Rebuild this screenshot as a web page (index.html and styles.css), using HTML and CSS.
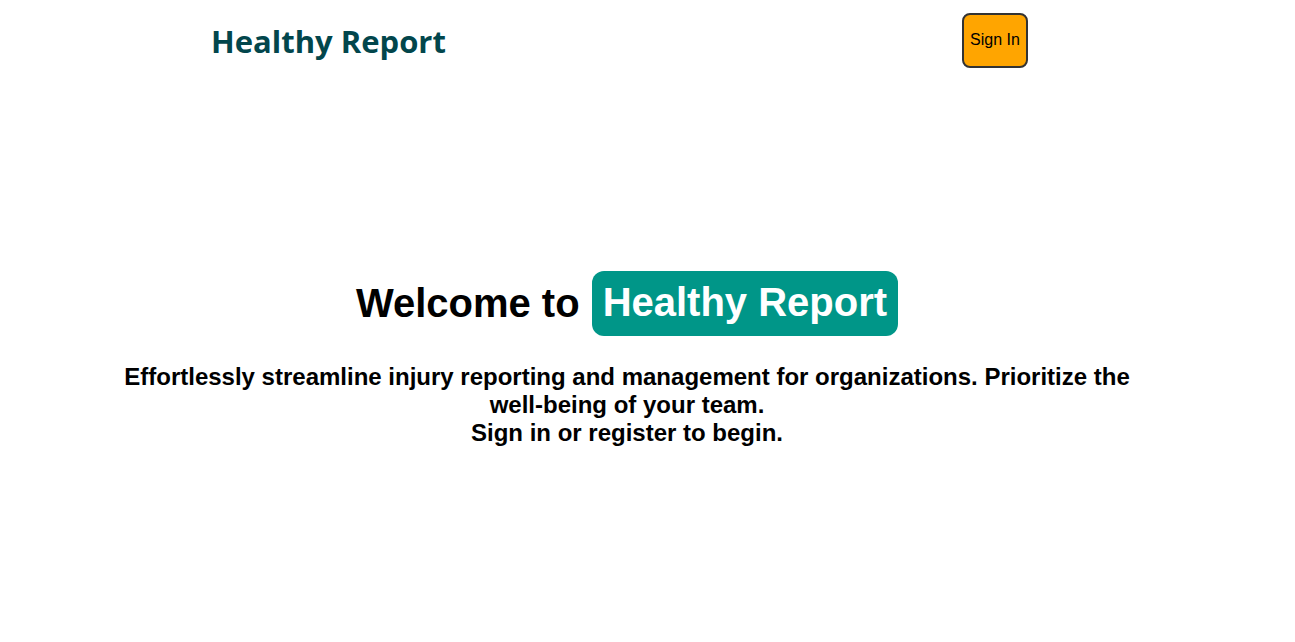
FILE: index.html
```html
<!DOCTYPE html>
<html lang="en">
<head>
<meta charset="utf-8">
<title>Healthy Report</title>
<link rel="stylesheet" href="styles.css">
</head>
<body>
<header class="topbar">
  <div class="brand">Healthy Report</div>
  <button class="signin">Sign In</button>
</header>
<main class="hero">
  <h1 class="title">Welcome to <span class="badge">Healthy Report</span></h1>
  <p class="lead">Effortlessly streamline injury reporting and management for organizations. Prioritize the well-being of your team.<br>Sign in or register to begin.</p>
</main>
</body>
</html>
```
FILE: styles.css
```css
html, body {
  margin: 0;
  padding: 0;
  background: #ffffff;
}
body {
  font-family: "Liberation Sans", Arial, sans-serif;
  color: #000;
  width: 1254px;
}
.topbar {
  display: flex;
  align-items: center;
  justify-content: space-between;
  padding: 13px 0 0 211px;
  width: 817px;
  height: 55px;
}
.brand {
  font-family: "Open Sans", "Noto Sans", sans-serif;
  font-weight: 700;
  font-size: 31px;
  color: #02464c;
}
.signin {
  width: 66px;
  height: 55px;
  background: #ffa500;
  border: 2px solid #333;
  border-radius: 8px;
  font-family: "Liberation Sans", Arial, sans-serif;
  font-size: 16px;
  color: #000;
  padding: 0 0 2px;
}
.hero {
  display: flex;
  flex-direction: column;
  align-items: center;
  padding-top: 203px;
}
.title {
  margin: 0;
  font-size: 40px;
  font-weight: 700;
  display: flex;
  align-items: center;
  gap: 12px;
}
.badge {
  background: #009688;
  color: #fff;
  border-radius: 12px;
  padding: 9px 11px 11px;
}
.lead {
  margin: 27px 0 0;
  max-width: 1040px;
  text-align: center;
  font-size: 24px;
  font-weight: 700;
  line-height: 28px;
}
```
